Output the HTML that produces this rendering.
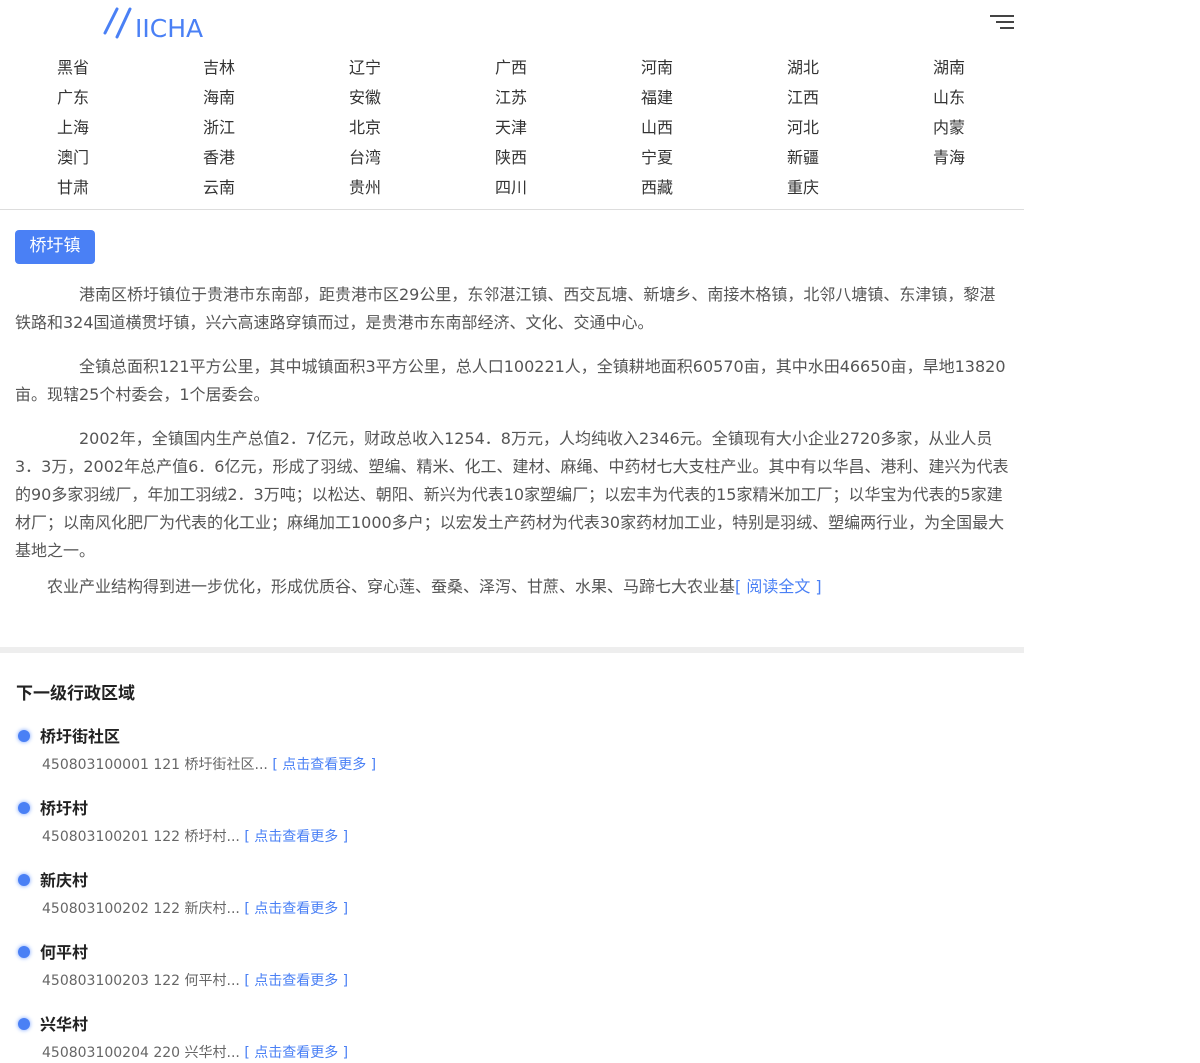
<!DOCTYPE html>
<html><head><meta charset="utf-8"><style>
body{margin:0;background:#fff;font-family:"DejaVu Sans","Noto Sans CJK SC",sans-serif;color:#333;}
.wrap{width:1024px;position:relative;}
.hdr{height:48px;position:relative;}
.logo{position:absolute;left:103px;top:6px;}
.menu{position:absolute;left:990px;top:15px;}
.menu i{display:block;height:2px;background:#444;margin-bottom:4px;margin-left:auto}
.grid{position:relative;height:161px;border-bottom:1px solid #ddd;}
.grid span{position:absolute;font-size:16px;color:#333;line-height:20px;}
.btn{position:absolute;left:15px;top:230px;width:80px;height:34px;background:#4a80f5;border-radius:4px;color:#fff;font-size:17px;line-height:32px;text-align:center;}
.txt{position:absolute;left:15px;top:281px;width:994px;font-size:16px;line-height:28px;color:#555;}
.txt p{margin:0 0 16px;text-indent:64px;}
.txt a{color:#4a80f5;text-decoration:none}
.bar{position:absolute;left:0;top:647px;width:1024px;height:6px;background:#eee;}
h3{position:absolute;left:16px;top:679px;margin:0;font-size:17px;color:#222;}
.it{position:absolute;left:0;}
.dot{position:absolute;left:18px;top:3px;width:12px;height:12px;border-radius:50%;background:#4a80f5;box-shadow:0 0 4px #6f9cff;}
.t{position:absolute;left:40px;top:-4px;font-weight:bold;font-size:16px;color:#222;white-space:nowrap}
.s{position:absolute;left:42px;top:27px;font-size:14px;color:#666;white-space:nowrap}
.s a{color:#4a80f5;text-decoration:none}
</style></head><body><div class="wrap">
<div class="hdr">
<svg class="logo" width="106" height="36" viewBox="0 0 106 36"><g stroke="#4a80f5" stroke-width="3" stroke-linecap="round"><line x1="14" y1="3" x2="2" y2="27"/><line x1="27" y1="3" x2="14" y2="31"/></g><text x="32" y="31" font-family="DejaVu Sans,sans-serif" font-size="25" fill="#4a80f5">IICHA</text></svg>
<div class="menu"><i style="width:24px"></i><i style="width:18px"></i><i style="width:14px"></i></div>
</div>
<div class="grid">
<span style="left:57px;top:10px">黑省</span><span style="left:203px;top:10px">吉林</span><span style="left:349px;top:10px">辽宁</span><span style="left:495px;top:10px">广西</span><span style="left:641px;top:10px">河南</span><span style="left:787px;top:10px">湖北</span><span style="left:933px;top:10px">湖南</span>
<span style="left:57px;top:40px">广东</span><span style="left:203px;top:40px">海南</span><span style="left:349px;top:40px">安徽</span><span style="left:495px;top:40px">江苏</span><span style="left:641px;top:40px">福建</span><span style="left:787px;top:40px">江西</span><span style="left:933px;top:40px">山东</span>
<span style="left:57px;top:70px">上海</span><span style="left:203px;top:70px">浙江</span><span style="left:349px;top:70px">北京</span><span style="left:495px;top:70px">天津</span><span style="left:641px;top:70px">山西</span><span style="left:787px;top:70px">河北</span><span style="left:933px;top:70px">内蒙</span>
<span style="left:57px;top:100px">澳门</span><span style="left:203px;top:100px">香港</span><span style="left:349px;top:100px">台湾</span><span style="left:495px;top:100px">陕西</span><span style="left:641px;top:100px">宁夏</span><span style="left:787px;top:100px">新疆</span><span style="left:933px;top:100px">青海</span>
<span style="left:57px;top:130px">甘肃</span><span style="left:203px;top:130px">云南</span><span style="left:349px;top:130px">贵州</span><span style="left:495px;top:130px">四川</span><span style="left:641px;top:130px">西藏</span><span style="left:787px;top:130px">重庆</span>
</div>
<div class="btn">桥圩镇</div>
<div class="txt">
<p>港南区桥圩镇位于贵港市东南部，距贵港市区29公里，东邻湛江镇、西交瓦塘、新塘乡、南接木格镇，北邻八塘镇、东津镇，黎湛铁路和324国道横贯圩镇，兴六高速路穿镇而过，是贵港市东南部经济、文化、交通中心。</p>
<p>全镇总面积121平方公里，其中城镇面积3平方公里，总人口100221人，全镇耕地面积60570亩，其中水田46650亩，旱地13820亩。现辖25个村委会，1个居委会。</p>
<p style="margin-bottom:8px">2002年，全镇国内生产总值2．7亿元，财政总收入1254．8万元，人均纯收入2346元。全镇现有大小企业2720多家，从业人员3．3万，2002年总产值6．6亿元，形成了羽绒、塑编、精米、化工、建材、麻绳、中药材七大支柱产业。其中有以华昌、港利、建兴为代表的90多家羽绒厂，年加工羽绒2．3万吨；以松达、朝阳、新兴为代表10家塑编厂；以宏丰为代表的15家精米加工厂；以华宝为代表的5家建材厂；以南风化肥厂为代表的化工业；麻绳加工1000多户；以宏发土产药材为代表30家药材加工业，特别是羽绒、塑编两行业，为全国最大基地之一。</p>
<p style="text-indent:32px">农业产业结构得到进一步优化，形成优质谷、穿心莲、蚕桑、泽泻、甘蔗、水果、马蹄七大农业基<a>[ 阅读全文 ]</a></p>
</div>
<div class="bar"></div>
<h3>下一级行政区域</h3>
<div class="it" style="top:727px"><div class="dot"></div><div class="t">桥圩街社区</div><div class="s">450803100001 121 桥圩街社区... <a>[ 点击查看更多 ]</a></div></div>
<div class="it" style="top:799px"><div class="dot"></div><div class="t">桥圩村</div><div class="s">450803100201 122 桥圩村... <a>[ 点击查看更多 ]</a></div></div>
<div class="it" style="top:871px"><div class="dot"></div><div class="t">新庆村</div><div class="s">450803100202 122 新庆村... <a>[ 点击查看更多 ]</a></div></div>
<div class="it" style="top:943px"><div class="dot"></div><div class="t">何平村</div><div class="s">450803100203 122 何平村... <a>[ 点击查看更多 ]</a></div></div>
<div class="it" style="top:1015px"><div class="dot"></div><div class="t">兴华村</div><div class="s">450803100204 220 兴华村... <a>[ 点击查看更多 ]</a></div></div>
</div></body></html>
